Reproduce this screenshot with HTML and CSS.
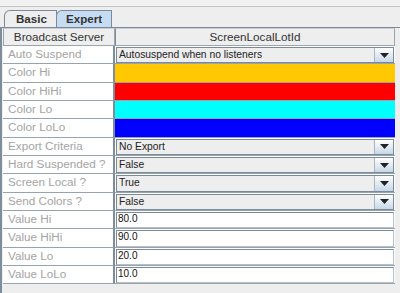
FILE: index.html
```html
<!DOCTYPE html>
<html>
<head>
<meta charset="utf-8">
<link rel="stylesheet" href="styles.css">
</head>
<body>
<div class="app">
  <div class="top"></div>
  <div class="tabs">
    <div class="tab">Basic</div>
    <div class="tab active">Expert</div>
    <div class="tabfill"></div>
  </div>
  <div class="panel">
    <div class="grid">
      <div class="hdr">Broadcast Server</div>
      <div class="hdr">ScreenLocalLotId</div>

      <div class="lbl">Auto Suspend</div>
      <div class="val"><div class="combo"><span class="ctext">Autosuspend when no listeners</span><span class="arrow"><svg width="9" height="5" viewBox="0 0 9 5"><path d="M0 0H9L4.5 5Z" fill="#222"/></svg></span></div></div>

      <div class="lbl">Color Hi</div>
      <div class="val"><div class="swatch orange"></div></div>
      <div class="lbl">Color HiHi</div>
      <div class="val"><div class="swatch red"></div></div>
      <div class="lbl">Color Lo</div>
      <div class="val"><div class="swatch cyan"></div></div>
      <div class="lbl">Color LoLo</div>
      <div class="val"><div class="swatch blue"></div></div>

      <div class="lbl">Export Criteria</div>
      <div class="val"><div class="combo"><span class="ctext">No Export</span><span class="arrow"><svg width="9" height="5" viewBox="0 0 9 5"><path d="M0 0H9L4.5 5Z" fill="#222"/></svg></span></div></div>
      <div class="lbl">Hard Suspended ?</div>
      <div class="val"><div class="combo"><span class="ctext">False</span><span class="arrow"><svg width="9" height="5" viewBox="0 0 9 5"><path d="M0 0H9L4.5 5Z" fill="#222"/></svg></span></div></div>
      <div class="lbl">Screen Local ?</div>
      <div class="val"><div class="combo"><span class="ctext">True</span><span class="arrow"><svg width="9" height="5" viewBox="0 0 9 5"><path d="M0 0H9L4.5 5Z" fill="#222"/></svg></span></div></div>
      <div class="lbl">Send Colors ?</div>
      <div class="val"><div class="combo"><span class="ctext">False</span><span class="arrow"><svg width="9" height="5" viewBox="0 0 9 5"><path d="M0 0H9L4.5 5Z" fill="#222"/></svg></span></div></div>

      <div class="lbl">Value Hi</div>
      <div class="val"><div class="field">80.0</div></div>
      <div class="lbl">Value HiHi</div>
      <div class="val"><div class="field">90.0</div></div>
      <div class="lbl">Value Lo</div>
      <div class="val"><div class="field">20.0</div></div>
      <div class="lbl">Value LoLo</div>
      <div class="val"><div class="field">10.0</div></div>
    </div>
  </div>
</div>
</body>
</html>
```

FILE: styles.css
```css
html, body {
  margin: 0;
  padding: 0;
}
body {
  width: 400px;
  height: 293px;
  overflow: hidden;
  background: #eeeeee;
  font-family: "Liberation Sans", Arial, sans-serif;
}
.app {
  display: flex;
  flex-direction: column;
  height: 293px;
}
.top {
  height: 6px;
  background: #f2f2f2;
  border-bottom: 1px solid #c4c4c4;
}
.tabs {
  display: flex;
  align-items: flex-end;
  height: 19px;
  padding-left: 4px;
  margin-top: 1px;
}
.tab {
  height: 17px;
  box-sizing: border-box;
  border: 1px solid #7a8a99;
  border-bottom: none;
  border-top-left-radius: 6px;
  background: #eeeeee;
  font-weight: bold;
  font-size: 11.6px;
  color: #333;
  line-height: 16px;
  padding: 0 8px 0 11px;
  width: 53px;
}
.tab.active {
  background: #c6dcf2;
  width: 56px;
  padding-left: 9px;
  margin-left: -1px;
}
.tabfill {
  flex: 1;
  height: 1px;
  align-self: flex-end;
}
.panel {
  flex: 1;
  border-left: 2px solid #7e8d9c;
  border-top: 1px solid #7a8a99;
  padding-left: 1px;
}
.grid {
  display: grid;
  grid-template-columns: 112px 280px;
  grid-template-rows: 18px;
  grid-auto-rows: 18.33px;
  width: 392px;
}
.hdr {
  background: #eeeeee;
  border: 1px solid #9aa5b0;
  border-top-color: #c8ced4;
  font-size: 11.7px;
  color: #333;
  text-align: center;
  line-height: 16px;
  box-sizing: border-box;
}
.hdr + .hdr {
  border-left: 1px solid #7e8d9c;
}
.lbl {
  background: #fff;
  color: #a4a4a4;
  font-size: 11.7px;
  line-height: 16px;
  padding-left: 5px;
  border-bottom: 1px solid #97a3ae;
  border-right: 2px solid #7e8d9c;
  box-sizing: border-box;
  white-space: nowrap;
  overflow: hidden;
}
.val {
  border-bottom: 1px solid #97a3ae;
  box-sizing: border-box;
  display: flex;
  padding: 1px 0 0 1px;
  background: #fff;
}
.swatch {
  flex: 1;
  margin: -1px 0 0 -1px;
}
.orange { background: #ffc800; }
.red { background: #ff0000; }
.cyan { background: #00ffff; }
.blue { background: #0000ff; }
.combo {
  flex: 1;
  display: flex;
  background: #eeeeee;
  border: 1px solid #7a8a99;
  box-sizing: border-box;
  margin-right: 1px;
}
.ctext {
  flex: 1;
  font-size: 10.3px;
  color: #222;
  line-height: 13px;
  padding-left: 2px;
  border-right: 1px solid #aab4be;
}
.arrow {
  width: 18px;
  display: flex;
  align-items: center;
  justify-content: center;
  background: linear-gradient(#ffffff, #c7d7e8);
}
.field {
  flex: 1;
  background: #fff;
  border: 1px solid #7a8a99;
  border-right-color: #b7c0c9;
  border-bottom-color: #b7c0c9;
  box-shadow: inset 1px 1px 0 #fff;
  font-size: 10px;
  color: #111;
  line-height: 12px;
  padding-left: 1px;
  box-sizing: border-box;
  margin-right: 1px;
}
```
